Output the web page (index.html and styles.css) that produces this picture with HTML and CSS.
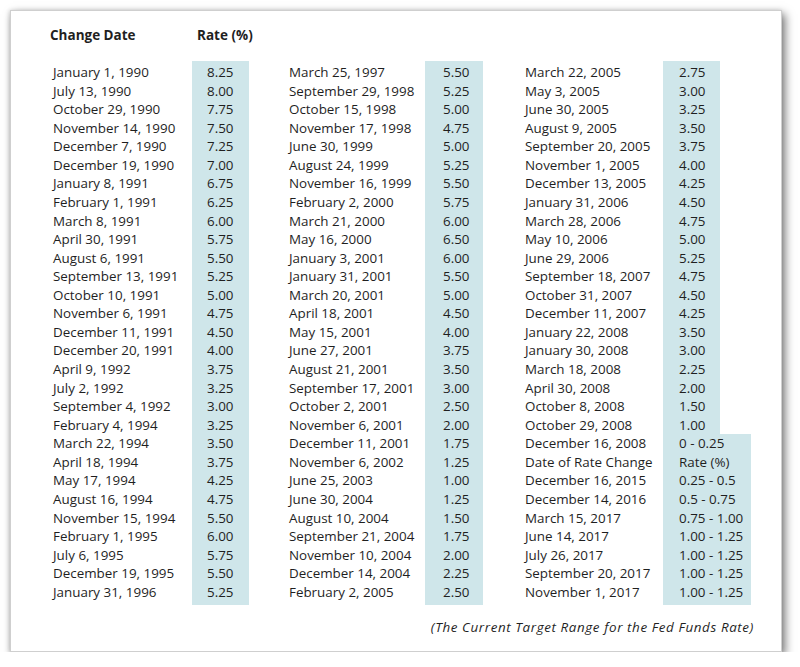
FILE: index.html
```html
<!DOCTYPE html>
<html>
<head>
<meta charset="utf-8">
<link rel="stylesheet" href="styles.css">
</head>
<body>
<div class="card">
  <div class="head">
    <span class="h-date">Change Date</span>
    <span class="h-rate">Rate (%)</span>
  </div>
  <div class="cols">
    <div class="col c1">
      <div class="dates">
        <div>January 1, 1990</div><div>July 13, 1990</div><div>October 29, 1990</div><div>November 14, 1990</div><div>December 7, 1990</div><div>December 19, 1990</div><div>January 8, 1991</div><div>February 1, 1991</div><div>March 8, 1991</div><div>April 30, 1991</div><div>August 6, 1991</div><div>September 13, 1991</div><div>October 10, 1991</div><div>November 6, 1991</div><div>December 11, 1991</div><div>December 20, 1991</div><div>April 9, 1992</div><div>July 2, 1992</div><div>September 4, 1992</div><div>February 4, 1994</div><div>March 22, 1994</div><div>April 18, 1994</div><div>May 17, 1994</div><div>August 16, 1994</div><div>November 15, 1994</div><div>February 1, 1995</div><div>July 6, 1995</div><div>December 19, 1995</div><div>January 31, 1996</div>
      </div>
      <div class="rates">
        <div class="box">
          <div>8.25</div><div>8.00</div><div>7.75</div><div>7.50</div><div>7.25</div><div>7.00</div><div>6.75</div><div>6.25</div><div>6.00</div><div>5.75</div><div>5.50</div><div>5.25</div><div>5.00</div><div>4.75</div><div>4.50</div><div>4.00</div><div>3.75</div><div>3.25</div><div>3.00</div><div>3.25</div><div>3.50</div><div>3.75</div><div>4.25</div><div>4.75</div><div>5.50</div><div>6.00</div><div>5.75</div><div>5.50</div><div>5.25</div>
        </div>
      </div>
    </div>
    <div class="col c2">
      <div class="dates">
        <div>March 25, 1997</div><div>September 29, 1998</div><div>October 15, 1998</div><div>November 17, 1998</div><div>June 30, 1999</div><div>August 24, 1999</div><div>November 16, 1999</div><div>February 2, 2000</div><div>March 21, 2000</div><div>May 16, 2000</div><div>January 3, 2001</div><div>January 31, 2001</div><div>March 20, 2001</div><div>April 18, 2001</div><div>May 15, 2001</div><div>June 27, 2001</div><div>August 21, 2001</div><div>September 17, 2001</div><div>October 2, 2001</div><div>November 6, 2001</div><div>December 11, 2001</div><div>November 6, 2002</div><div>June 25, 2003</div><div>June 30, 2004</div><div>August 10, 2004</div><div>September 21, 2004</div><div>November 10, 2004</div><div>December 14, 2004</div><div>February 2, 2005</div>
      </div>
      <div class="rates">
        <div class="box">
          <div>5.50</div><div>5.25</div><div>5.00</div><div>4.75</div><div>5.00</div><div>5.25</div><div>5.50</div><div>5.75</div><div>6.00</div><div>6.50</div><div>6.00</div><div>5.50</div><div>5.00</div><div>4.50</div><div>4.00</div><div>3.75</div><div>3.50</div><div>3.00</div><div>2.50</div><div>2.00</div><div>1.75</div><div>1.25</div><div>1.00</div><div>1.25</div><div>1.50</div><div>1.75</div><div>2.00</div><div>2.25</div><div>2.50</div>
        </div>
      </div>
    </div>
    <div class="col c3">
      <div class="dates">
        <div>March 22, 2005</div><div>May 3, 2005</div><div>June 30, 2005</div><div>August 9, 2005</div><div>September 20, 2005</div><div>November 1, 2005</div><div>December 13, 2005</div><div>January 31, 2006</div><div>March 28, 2006</div><div>May 10, 2006</div><div>June 29, 2006</div><div>September 18, 2007</div><div>October 31, 2007</div><div>December 11, 2007</div><div>January 22, 2008</div><div>January 30, 2008</div><div>March 18, 2008</div><div>April 30, 2008</div><div>October 8, 2008</div><div>October 29, 2008</div><div>December 16, 2008</div><div>Date of Rate Change</div><div>December 16, 2015</div><div>December 14, 2016</div><div>March 15, 2017</div><div>June 14, 2017</div><div>July 26, 2017</div><div>September 20, 2017</div><div>November 1, 2017</div>
      </div>
      <div class="rates">
        <div class="box">
          <div>2.75</div><div>3.00</div><div>3.25</div><div>3.50</div><div>3.75</div><div>4.00</div><div>4.25</div><div>4.50</div><div>4.75</div><div>5.00</div><div>5.25</div><div>4.75</div><div>4.50</div><div>4.25</div><div>3.50</div><div>3.00</div><div>2.25</div><div>2.00</div><div>1.50</div><div>1.00</div>
        </div>
        <div class="box wide">
          <div>0 - 0.25</div><div>Rate (%)</div><div>0.25 - 0.5</div><div>0.5 - 0.75</div><div>0.75 - 1.00</div><div>1.00 - 1.25</div><div>1.00 - 1.25</div><div>1.00 - 1.25</div><div>1.00 - 1.25</div>
        </div>
      </div>
    </div>
  </div>
  <p class="note">(The Current Target Range for the Fed Funds Rate)</p>
</div>
</body>
</html>
```

FILE: styles.css
```css
html, body {
  margin: 0;
  padding: 0;
  background: #ffffff;
}
body {
  padding: 10px 0 0 10px;
  font-family: "Open Sans", "Noto Sans", sans-serif;
  color: #1f1f1f;
}
.card {
  width: 770px;
  height: 640px;
  border: 1px solid #cfcfcf;
  background: #ffffff;
  box-shadow: 3px 4px 9px rgba(0, 0, 0, 0.55), -1px 0 4px rgba(0, 0, 0, 0.12);
  box-sizing: content-box;
  display: flex;
  flex-direction: column;
}
.head {
  display: flex;
  padding: 15px 0 0 39px;
  height: 20px;
  font-weight: 700;
  font-size: 13.5px;
  line-height: 18px;
}
.h-date {
  width: 147px;
}
.cols {
  display: flex;
  padding: 15px 0 0 42px;
  gap: 40px;
  font-size: 13.4px;
  line-height: 18.57px;
}
.col {
  display: flex;
}
.dates {
  padding-top: 2px;
}
.c1 .dates { width: 139px; }
.c2 .dates { width: 136px; }
.c3 .dates { width: 138px; }
.c3 { margin-left: 2px; }
.rates {
  display: flex;
  flex-direction: column;
  align-items: flex-start;
}
.box {
  background: #cfe6ea;
  width: 57px;
  box-sizing: border-box;
  padding-left: 15px;
  white-space: nowrap;
}
.rates > .box:first-child { padding-top: 2px; }
.rates > .box:last-child { padding-bottom: 4px; }
.c2 .box { width: 58px; padding-left: 18px; }
.c3 .box { padding-left: 16px; }
.c3 .box.wide { width: 88px; }
.note {
  margin: 13px 0 0 0;
  padding-right: 27px;
  text-align: right;
  font-style: italic;
  font-size: 13.4px;
  letter-spacing: 0.6px;
}
```
